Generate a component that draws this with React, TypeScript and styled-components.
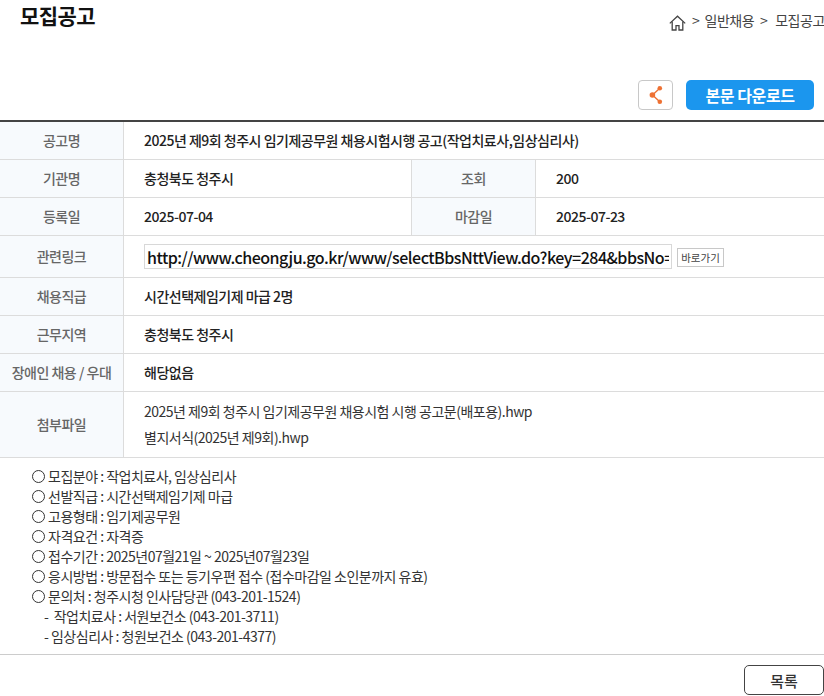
import styled, { createGlobalStyle } from 'styled-components';

const GlobalStyle = createGlobalStyle`
  html, body {
    margin: 0;
    padding: 0;
    background: #fff;
    overflow: hidden;
  }
  body {
    font-family: 'Noto Sans CJK KR', 'Noto Sans', sans-serif;
    color: #222;
  }
  * {
    box-sizing: border-box;
  }
`;

const notices = [
  '모집분야 : 작업치료사, 임상심리사',
  '선발직급 : 시간선택제임기제 마급',
  '고용형태 : 임기제공무원',
  '자격요건 : 자격증',
  '접수기간 : 2025년07월21일 ~ 2025년07월23일',
  '응시방법 : 방문접수 또는 등기우편 접수 (접수마감일 소인분까지 유효)',
  '문의처 : 청주시청 인사담당관 (043-201-1524)',
];

const LINK_URL = 'http://www.cheongju.go.kr/www/selectBbsNttView.do?key=284&bbsNo=38&nttNo=123456';

function HomeIcon() {
  return (
    <svg width="17" height="16" viewBox="0 0 17 16" fill="none" stroke="#444" strokeWidth="1.3">
      <path d="M0.8 8.4 8.5 1.2l7.7 7.2" />
      <path d="M3.2 6.6V15h3.8v-4.4h3V15h3.8V6.6" />
    </svg>
  );
}

function ShareIcon() {
  return (
    <svg width="14" height="20" viewBox="0 0 14 20" fill="#ee7133" stroke="#ee7133">
      <path d="M10.5 3.5 3.5 10l7 6.5" fill="none" strokeWidth="1.4" />
      <circle cx="10.8" cy="3.2" r="2.3" strokeWidth="0" />
      <circle cx="3.4" cy="10" r="2.8" strokeWidth="0" />
      <circle cx="10.8" cy="16.8" r="2.3" strokeWidth="0" />
    </svg>
  );
}

export default function App() {
  return (
    <Page>
      <GlobalStyle />
      <Header>
        <Title>모집공고</Title>
        <Breadcrumb>
          <HomeIcon />
          <Crumb>&gt;&nbsp;&nbsp;일반채용</Crumb>
          <Crumb>&gt;&nbsp;&nbsp;&nbsp;모집공고</Crumb>
        </Breadcrumb>
      </Header>
      <Actions>
        <ShareButton aria-label="공유">
          <ShareIcon />
        </ShareButton>
        <DownloadButton>본문 다운로드</DownloadButton>
      </Actions>
      <Table>
        <colgroup>
          <col width="124" />
          <col width="288" />
          <col width="124" />
          <col />
        </colgroup>
        <tbody>
          <Row $height={38}>
            <Label>공고명</Label>
            <Value colSpan={3}>2025년 제9회 청주시 임기제공무원 채용시험시행 공고(작업치료사,임상심리사)</Value>
          </Row>
          <Row $height={38}>
            <Label>기관명</Label>
            <Value>충청북도 청주시</Value>
            <Label>조회</Label>
            <Value>200</Value>
          </Row>
          <Row $height={38}>
            <Label>등록일</Label>
            <Value>2025-07-04</Value>
            <Label>마감일</Label>
            <Value>2025-07-23</Value>
          </Row>
          <Row $height={42}>
            <Label>관련링크</Label>
            <Value colSpan={3}>
              <LinkRow>
                <LinkInput readOnly value={LINK_URL} />
                <GoButton>바로가기</GoButton>
              </LinkRow>
            </Value>
          </Row>
          <Row $height={38}>
            <Label>채용직급</Label>
            <Value colSpan={3}>시간선택제임기제 마급 2명</Value>
          </Row>
          <Row $height={38}>
            <Label>근무지역</Label>
            <Value colSpan={3}>충청북도 청주시</Value>
          </Row>
          <Row $height={38}>
            <Label>장애인 채용 / 우대</Label>
            <Value colSpan={3}>해당없음</Value>
          </Row>
          <Row $height={66}>
            <Label>첨부파일</Label>
            <Value colSpan={3}>
              <FileName>2025년 제9회 청주시 임기제공무원 채용시험 시행 공고문(배포용).hwp</FileName>
              <FileName>별지서식(2025년 제9회).hwp</FileName>
            </Value>
          </Row>
        </tbody>
      </Table>
      <Notice>
        {notices.map((text) => (
          <NoticeLine key={text}>
            <Circle />
            {text}
          </NoticeLine>
        ))}
        <SubLine>-&nbsp;&nbsp;작업치료사 : 서원보건소 (043-201-3711)</SubLine>
        <SubLine>- 임상심리사 : 청원보건소 (043-201-4377)</SubLine>
      </Notice>
      <Footer>
        <ListButton>목록</ListButton>
      </Footer>
    </Page>
  );
}

const Page = styled.div`
  width: 824px;
  height: 696px;
  overflow: hidden;
`;

const Header = styled.div`
  display: flex;
  justify-content: space-between;
  height: 80px;
  padding-left: 20px;
`;

const Title = styled.h1`
  margin: 0;
  font-size: 21px;
  line-height: 31px;
  font-weight: 700;
  color: #111;
  letter-spacing: -0.6px;
`;

const Breadcrumb = styled.div`
  display: flex;
  align-items: flex-start;
  gap: 6px;
  padding-top: 13px;
  width: 155px;
  flex-shrink: 0;
  white-space: nowrap;
  svg {
    margin-top: 2px;
    flex-shrink: 0;
  }
`;

const Crumb = styled.span`
  font-size: 14px;
  line-height: 14px;
  color: #444;
  letter-spacing: -0.5px;
`;

const Actions = styled.div`
  display: flex;
  justify-content: flex-end;
  align-items: center;
  gap: 13px;
  height: 30px;
  padding-right: 10px;
`;

const ShareButton = styled.button`
  display: flex;
  align-items: center;
  justify-content: center;
  width: 35px;
  height: 30px;
  padding: 0;
  background: #fff;
  border: 1px solid #c8c8c8;
  border-radius: 4px;
`;

const DownloadButton = styled.button`
  width: 128px;
  height: 30px;
  padding: 0;
  background: #1b96ee;
  border: 0;
  border-radius: 5px;
  color: #fff;
  font-family: inherit;
  font-size: 16px;
  font-weight: 700;
  letter-spacing: -0.4px;
`;

const Table = styled.table`
  width: 824px;
  margin-top: 10px;
  border-collapse: separate;
  border-spacing: 0;
  table-layout: fixed;
  border-top: 2px solid #444;
`;

const Row = styled.tr<{ $height: number }>`
  height: ${({ $height }) => $height}px;
`;

const Label = styled.td`
  padding: 0 0 2px;
  background: #f7fafd;
  border-right: 1px solid #dcdcdc;
  border-bottom: 1px solid #dcdcdc;
  border-left: 0;
  text-align: center;
  font-size: 14px;
  font-weight: 500;
  color: #666;
  letter-spacing: -0.5px;
  white-space: nowrap;
`;

const Value = styled.td`
  padding: 0 0 2px 20px;
  background: #fff;
  border-right: 1px solid #dcdcdc;
  border-bottom: 1px solid #dcdcdc;
  font-size: 14px;
  font-weight: 500;
  color: #222;
  letter-spacing: -0.5px;
  &:last-child {
    border-right: 0;
  }
`;

const LinkRow = styled.div`
  display: flex;
  align-items: center;
  gap: 5px;
  padding-top: 2px;
`;

const LinkInput = styled.input`
  width: 528px;
  height: 25px;
  padding: 0 2px;
  border: 1px solid #d8d8d8;
  font-family: 'Noto Sans CJK KR', 'Noto Sans', sans-serif;
  font-size: 16px;
  font-weight: 500;
  letter-spacing: -0.5px;
  color: #111;
  outline: none;
`;

const GoButton = styled.button`
  width: 47px;
  height: 19px;
  margin-top: 2px;
  padding: 0;
  background: #fff;
  border: 1px solid #c8c8c8;
  font-family: inherit;
  font-size: 10.5px;
  color: #444;
`;

const FileName = styled.div`
  font-size: 14px;
  line-height: 26px;
  font-weight: 400;
  color: #333;
  letter-spacing: -0.5px;
  white-space: nowrap;
`;

const Notice = styled.div`
  height: 197px;
  padding: 8px 0 0 32px;
  border-bottom: 1px solid #ccc;
`;

const NoticeLine = styled.div`
  display: flex;
  align-items: center;
  gap: 3px;
  height: 20px;
  font-size: 14px;
  color: #333;
  letter-spacing: -0.5px;
  white-space: nowrap;
`;

const Circle = styled.span`
  width: 13px;
  height: 13px;
  border: 1px solid #333;
  border-radius: 50%;
  flex-shrink: 0;
`;

const SubLine = styled.div`
  height: 20px;
  padding-left: 12px;
  font-size: 14px;
  line-height: 20px;
  color: #333;
  letter-spacing: -0.5px;
  white-space: nowrap;
`;

const Footer = styled.div`
  display: flex;
  justify-content: flex-end;
  padding-top: 10px;
`;

const ListButton = styled.button`
  width: 80px;
  height: 30px;
  padding: 0;
  background: #fff;
  border: 1px solid #444;
  border-radius: 5px;
  font-family: inherit;
  font-size: 15px;
  font-weight: 500;
  color: #333;
`;
